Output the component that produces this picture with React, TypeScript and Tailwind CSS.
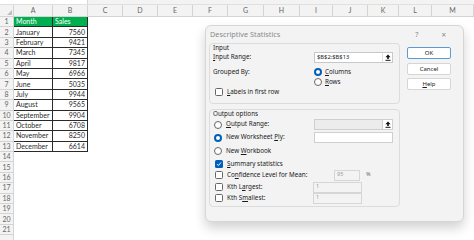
import React from "react";

const months = [
  ["January", 7560],
  ["February", 9421],
  ["March", 7345],
  ["April", 9817],
  ["May", 6966],
  ["June", 5035],
  ["July", 9944],
  ["August", 9565],
  ["September", 9904],
  ["October", 6708],
  ["November", 8250],
  ["December", 6614],
] as const;

const letters = ["A", "B", "C", "D", "E", "F", "G", "H", "I", "J", "K", "L", "M"];
const gridCols =
  "grid grid-cols-[14px_39px_35px_35px_35px_35px_35px_36px_36px_33px_35px_31px_33px_42px]";

function UploadIcon() {
  return (
    <svg width="6" height="7" viewBox="0 0 6 7">
      <path d="M3 0.5 L5.6 3.2 H3.8 V5 H2.2 V3.2 H0.4 Z" fill="#111" />
      <rect x="0.5" y="5.8" width="5" height="1" fill="#111" />
    </svg>
  );
}

function Radio({ on }: { on?: boolean }) {
  return on ? (
    <span className="w-[8px] h-[8px] rounded-full border-[2.5px] border-[#005fb8] bg-white shrink-0" />
  ) : (
    <span className="w-[8px] h-[8px] rounded-full border border-[#666] bg-white shrink-0" />
  );
}

function Check({ on }: { on?: boolean }) {
  return on ? (
    <span className="w-[8px] h-[8px] rounded-[1.5px] bg-[#005fb8] shrink-0 flex items-center justify-center">
      <svg width="6" height="6" viewBox="0 0 6 6">
        <path d="M1 3.2 L2.4 4.5 L5 1.5" stroke="white" strokeWidth="1" fill="none" />
      </svg>
    </span>
  ) : (
    <span className="w-[8px] h-[8px] rounded-[1.5px] border border-[#666] bg-white shrink-0" />
  );
}

function Sheet() {
  const rows = Array.from({ length: 22 }, (_, i) => i + 1);
  return (
    <div className="font-['Lato',sans-serif] text-[7px] text-[#2a2a2a]">
      <div className="h-[5px] bg-[#f3f3f3] border-b border-[#e0e0e0] flex">
        <div className="w-[88px] h-[4px] bg-white border-r border-[#d8d8d8]" />
      </div>
      <div className={`${gridCols} h-[12px] bg-[#f3f3f3] border-b border-[#d4d4d4] text-[#666]`}>
        <div className="border-r border-[#d4d4d4] relative">
          <span className="absolute right-[1px] bottom-[1px] w-0 h-0 border-l-[5px] border-l-transparent border-b-[5px] border-b-[#bdbdbd]" />
        </div>
        {letters.map((l) => (
          <div key={l} className="border-r border-[#d4d4d4] flex items-center justify-center">
            {l}
          </div>
        ))}
      </div>
      {rows.map((r) => {
        const data = r === 1 ? null : months[r - 2];
        const inTable = r <= 13;
        return (
          <div key={r} className={`${gridCols} h-[10.4px]`}>
            <div className="bg-[#f3f3f3] border-r border-b border-[#d4d4d4] text-[#666] flex items-center justify-center leading-none">
              {r < 22 ? r : ""}
            </div>
            {inTable ? (
              r === 1 ? (
                <>
                  <div className="bg-[#00b050] text-white border-r border-b border-[#2a2a2a] flex items-center pl-[2px] leading-none">
                    Month
                  </div>
                  <div className="bg-[#00b050] text-white border-r border-b border-[#2a2a2a] flex items-center pl-[2px] leading-none">
                    Sales
                  </div>
                </>
              ) : (
                <>
                  <div className="border-r border-b border-[#2a2a2a] flex items-center pl-[2px] leading-none">
                    {data![0]}
                  </div>
                  <div className="border-r border-b border-[#2a2a2a] flex items-center justify-end pr-[2px] leading-none">
                    {data![1]}
                  </div>
                </>
              )
            ) : (
              <>
                <div />
                <div />
              </>
            )}
          </div>
        );
      })}
    </div>
  );
}

function Dialog() {
  return (
    <div className="absolute left-[205px] top-[25px] w-[259px] h-[197px] bg-[#f3f3f3] border border-[#d6d6d6] rounded-[6px] shadow-[0_6px_12px_rgba(0,0,0,0.18)] font-['Noto_Sans',sans-serif] text-[6.3px] text-[#1a1a1a] leading-none">
      <div className="h-[17px] flex items-center pl-[4px] pr-[17px] text-[7.3px] text-[#8a8a8a]">
        <span className="flex-1">Descriptive Statistics</span>
        <span className="mr-[23px]">?</span>
        <span className="text-[8px]">×</span>
      </div>
      <div className="flex pl-[3px]">
        <div className="w-[191px] flex flex-col gap-[5px]">
          <div className="h-[61px] border border-[#dcdcdc] rounded-[4px] pl-[3px]">
            <div className="h-[8px] flex items-center">Input</div>
            <div className="h-[11px] flex items-center">
              <span className="w-[101px]">
                <u>I</u>nput Range:
              </span>
              <div className="w-[79px] h-[11px] bg-white border border-[#c8c8c8] flex items-center pl-[2px]">
                <span className="flex-1 text-[5.8px]">$B$2:$B$13</span>
                <span className="w-[10px] h-full border-l border-[#e0e0e0] flex items-center justify-center">
                  <UploadIcon />
                </span>
              </div>
            </div>
            <div className="h-[10px] mt-[4px] flex items-center">
              <span className="w-[101px]">Grouped By:</span>
              <Radio on />
              <span className="ml-[3px]">
                <u>C</u>olumns
              </span>
            </div>
            <div className="h-[10px] flex items-center pl-[101px]">
              <Radio />
              <span className="ml-[3px]">
                <u>R</u>ows
              </span>
            </div>
            <div className="h-[10px] flex items-center pl-[2px]">
              <Check />
              <span className="ml-[4px]">
                <u>L</u>abels in first row
              </span>
            </div>
          </div>
          <div className="h-[98px] border border-[#dcdcdc] rounded-[4px] pl-[3px]">
            <div className="h-[9px] flex items-center">Output options</div>
            <div className="h-[11px] flex items-center">
              <span className="w-[101px] flex items-center pl-[1px]">
                <Radio />
                <span className="ml-[4px]">
                  <u>O</u>utput Range:
                </span>
              </span>
              <div className="w-[79px] h-[11px] bg-[#ececec] border border-[#cfcfcf] flex items-center justify-end">
                <span className="w-[10px] h-full bg-white border-l border-[#cfcfcf] flex items-center justify-center">
                  <UploadIcon />
                </span>
              </div>
            </div>
            <div className="h-[11px] mt-[2px] flex items-center">
              <span className="w-[101px] flex items-center pl-[1px]">
                <Radio on />
                <span className="ml-[4px]">
                  New Worksheet <u>P</u>ly:
                </span>
              </span>
              <div className="w-[79px] h-[11px] bg-white border border-[#cfcfcf]" />
            </div>
            <div className="h-[10px] mt-[3px] flex items-center pl-[1px]">
              <Radio />
              <span className="ml-[4px]">
                New <u>W</u>orkbook
              </span>
            </div>
            <div className="h-[10px] mt-[3px] flex items-center pl-[2px]">
              <Check on />
              <span className="ml-[4px]">
                <u>S</u>ummary statistics
              </span>
            </div>
            <div className="h-[10px] mt-[1px] flex items-center">
              <span className="w-[121px] flex items-center pl-[2px]">
                <Check />
                <span className="ml-[4px]">
                  Co<u>n</u>fidence Level for Mean:
                </span>
              </span>
              <div className="w-[26px] h-[11px] bg-[#f3f3f3] border border-[#d6d6d6] flex items-center pl-[2px] text-[#9a9a9a] text-[5.5px]">
                95
              </div>
              <span className="ml-[6px] text-[#666] text-[5.5px]">%</span>
            </div>
            <div className="h-[10px] mt-[2px] flex items-center">
              <span className="w-[100px] flex items-center pl-[2px]">
                <Check />
                <span className="ml-[4px]">
                  Kth L<u>a</u>rgest:
                </span>
              </span>
              <div className="w-[49px] h-[11px] bg-[#f3f3f3] border border-[#d6d6d6] flex items-center pl-[2px] text-[#9a9a9a] text-[5.5px]">
                1
              </div>
            </div>
            <div className="h-[10px] mt-[1px] flex items-center">
              <span className="w-[100px] flex items-center pl-[2px]">
                <Check />
                <span className="ml-[4px]">
                  Kth S<u>m</u>allest:
                </span>
              </span>
              <div className="w-[49px] h-[11px] bg-[#f3f3f3] border border-[#d6d6d6] flex items-center pl-[2px] text-[#9a9a9a] text-[5.5px]">
                1
              </div>
            </div>
          </div>
        </div>
        <div className="ml-[7px] w-[44px] pt-[4px] flex flex-col text-[6px]">
          <div className="h-[12px] bg-white border border-[#5b9bd5] rounded-[2px] flex items-center justify-center">
            OK
          </div>
          <div className="h-[12px] mt-[4px] bg-white border border-[#d6d6d6] rounded-[2px] flex items-center justify-center">
            Cancel
          </div>
          <div className="h-[12px] mt-[3px] bg-white border border-[#d6d6d6] rounded-[2px] flex items-center justify-center">
            <span>
              <u>H</u>elp
            </span>
          </div>
        </div>
      </div>
    </div>
  );
}

export default function App() {
  return (
    <div className="relative w-[474px] h-[240px] overflow-hidden bg-white">
      <Sheet />
      <Dialog />
    </div>
  );
}
